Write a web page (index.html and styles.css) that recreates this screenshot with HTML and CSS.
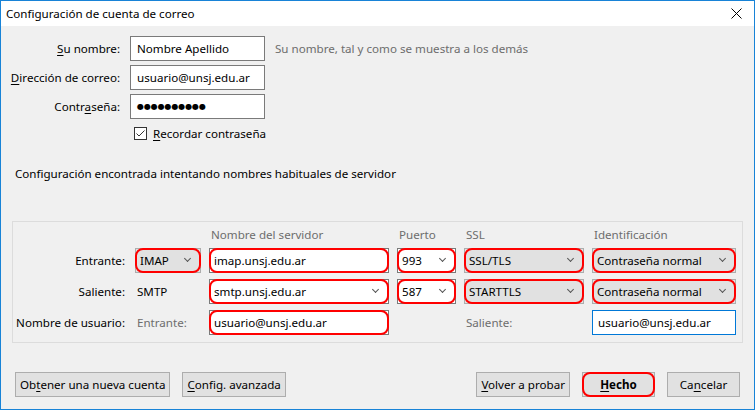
FILE: index.html
```html
<!DOCTYPE html>
<html>
  <head>
    <meta charset="utf-8">
    <title>Configuración de cuenta de correo</title>
    <link rel="stylesheet" href="styles.css">
  </head>
  <body>
    <div class="window">
      <div class="titlebar">
        <span class="title">Configuración de cuenta de correo</span>
        <svg class="close" width="11" height="11" viewBox="0 0 11 11">
          <path d="M0.5 0.5 L10.5 10.5 M10.5 0.5 L0.5 10.5" stroke="#000" stroke-width="1" fill="none"/>
        </svg>
      </div>

      <div class="content">
        <div class="identity">
          <label class="lbl"><u>S</u>u nombre:</label>
          <div class="input">Nombre Apellido</div>
          <span class="hint">Su nombre, tal y como se muestra a los demás</span>

          <label class="lbl"><u>D</u>irección de correo:</label>
          <div class="input">usuario@unsj.edu.ar</div>
          <span></span>

          <label class="lbl">Contr<u>a</u>seña:</label>
          <div class="input password">●●●●●●●●●●</div>
          <span></span>

          <div class="remember">
            <svg class="checkbox" width="13" height="13" viewBox="0 0 13 13">
              <rect x="0.5" y="0.5" width="12" height="12" fill="#fff" stroke="#333"/>
              <path d="M2.5 6.5 L5 9 L10.5 3.5" stroke="#333" stroke-width="1" fill="none"/>
            </svg>
            <span><u>R</u>ecordar contraseña</span>
          </div>
        </div>

        <p class="status">Configuración encontrada intentando nombres habituales de servidor</p>

        <div class="servers">
          <span></span>
          <span></span>
          <span class="head">Nombre del servidor</span>
          <span class="head">Puerto</span>
          <span class="head">SSL</span>
          <span class="head">Identificación</span>

          <span class="row-label">Entrante:</span>
          <div class="field select"><div class="ring"><span>IMAP</span><i class="arrow"></i></div></div>
          <div class="field"><div class="ring"><span>imap.unsj.edu.ar</span></div></div>
          <div class="field"><div class="ring"><span>993</span><i class="arrow"></i></div></div>
          <div class="field select"><div class="ring"><span>SSL/TLS</span><i class="arrow"></i></div></div>
          <div class="field select"><div class="ring"><span>Contraseña normal</span><i class="arrow"></i></div></div>

          <span class="row-label">Saliente:</span>
          <span class="plain">SMTP</span>
          <div class="field"><div class="ring"><span>smtp.unsj.edu.ar</span><i class="arrow"></i></div></div>
          <div class="field"><div class="ring"><span>587</span><i class="arrow"></i></div></div>
          <div class="field select"><div class="ring"><span>STARTTLS</span><i class="arrow"></i></div></div>
          <div class="field select"><div class="ring"><span>Contraseña normal</span><i class="arrow"></i></div></div>

          <span class="row-label">Nombre de usuario:</span>
          <span class="plain muted">Entrante:</span>
          <div class="field"><div class="ring"><span>usuario@unsj.edu.ar</span></div></div>
          <span></span>
          <span class="plain muted">Saliente:</span>
          <div class="field focused"><span>usuario@unsj.edu.ar</span></div>
        </div>

        <div class="actions">
          <button class="btn">Ob<u>t</u>ener una nueva cuenta</button>
          <button class="btn"><u>C</u>onfig. avanzada</button>
          <span class="spacer"></span>
          <button class="btn"><u>V</u>olver a probar</button>
          <button class="btn default"><span class="ring"><b><u>H</u>echo</b></span></button>
          <button class="btn">Ca<u>n</u>celar</button>
        </div>
      </div>
    </div>
  </body>
</html>
```

FILE: styles.css
```css
* {
  box-sizing: border-box;
}
html, body {
  margin: 0;
  height: 100%;
}
body {
  font-family: "Noto Sans", "Open Sans", sans-serif;
  font-size: 11.6px;
  color: #000;
  overflow: hidden;
}
u {
  text-decoration-thickness: 1px;
  text-underline-offset: 2px;
}
.window {
  height: 100vh;
  border: 1px solid #1883d7;
  border-top: 0;
  display: flex;
  flex-direction: column;
  background: #f0f0f0;
}
.titlebar {
  height: 26px;
  background: #fff;
  display: flex;
  align-items: center;
  padding: 0 12px 0 5px;
  border-top: 1px solid #1883d7;
}
.title {
  flex: 1;
}
.close {
  display: block;
}
.content {
  flex: 1;
  display: flex;
  flex-direction: column;
}

/* identity */
.identity {
  display: grid;
  grid-template-columns: 119px 135px auto;
  grid-template-rows: 25px 25px 25px 20px;
  column-gap: 10px;
  row-gap: 4px;
  padding-top: 10px;
  align-items: center;
}
.lbl {
  text-align: right;
  white-space: nowrap;
}
.input {
  height: 25px;
  border: 1px solid #7a7a7a;
  background: #fff;
  display: flex;
  align-items: center;
  padding: 0 6px;
  white-space: nowrap;
}
.password {
  font-family: "DejaVu Sans", sans-serif;
  font-size: 8px;
  letter-spacing: -0.1px;
}
.hint {
  color: #6d6d6d;
}
.remember {
  grid-column: 2 / span 2;
  display: flex;
  align-items: center;
  gap: 6px;
  padding-left: 4px;
  height: 20px;
  white-space: nowrap;
}
.checkbox {
  display: block;
}
.status {
  margin: 23px 0 0 14px;
  line-height: 16px;
}

/* server table */
.servers {
  margin: 39px 11px 0 11px;
  border: 1px solid #dcdcdc;
  padding: 2px 0 7px 0;
  display: grid;
  grid-template-columns: 114px 66px 180px 59px 120px 144px;
  grid-template-rows: 18px 25px 25px 25px;
  column-gap: 8px;
  row-gap: 6px;
  align-items: center;
}
.head {
  align-self: end;
  line-height: 15px;
  color: #6d6d6d;
  padding-left: 2px;
}
.row-label {
  text-align: right;
  padding-right: 2px;
  white-space: nowrap;
}
.plain {
  padding-left: 2px;
}
.muted {
  color: #6d6d6d;
}
.field {
  height: 25px;
  border: 1px solid #7a7a7a;
  background: #fff;
  display: flex;
  white-space: nowrap;
}
.field.select {
  border-color: #adadad;
  background: #e1e1e1;
}
.field.focused {
  border-color: #0078d7;
  align-items: center;
  padding-left: 5px;
}
.ring {
  flex: 1;
  margin: -1px;
  border: 2px solid #f00;
  border-radius: 8px;
  display: flex;
  align-items: center;
  padding: 0 9px 0 3px;
}
.ring span {
  flex: 1;
}
.arrow {
  width: 5px;
  height: 5px;
  border-right: 1px solid #555;
  border-bottom: 1px solid #555;
  transform: rotate(45deg);
  margin-top: -4px;
}

/* buttons */
.actions {
  margin-top: auto;
  display: flex;
  gap: 12px;
  padding: 0 14px 12px 14px;
}
.spacer {
  flex: 1;
}
.btn {
  font: inherit;
  color: #000;
  height: 25px;
  padding: 0 4px;
  background: #e1e1e1;
  border: 1px solid #adadad;
  min-width: 73px;
}
.btn.default {
  padding: 0;
  display: flex;
}
.btn.default .ring {
  justify-content: center;
  padding: 0;
}
```
